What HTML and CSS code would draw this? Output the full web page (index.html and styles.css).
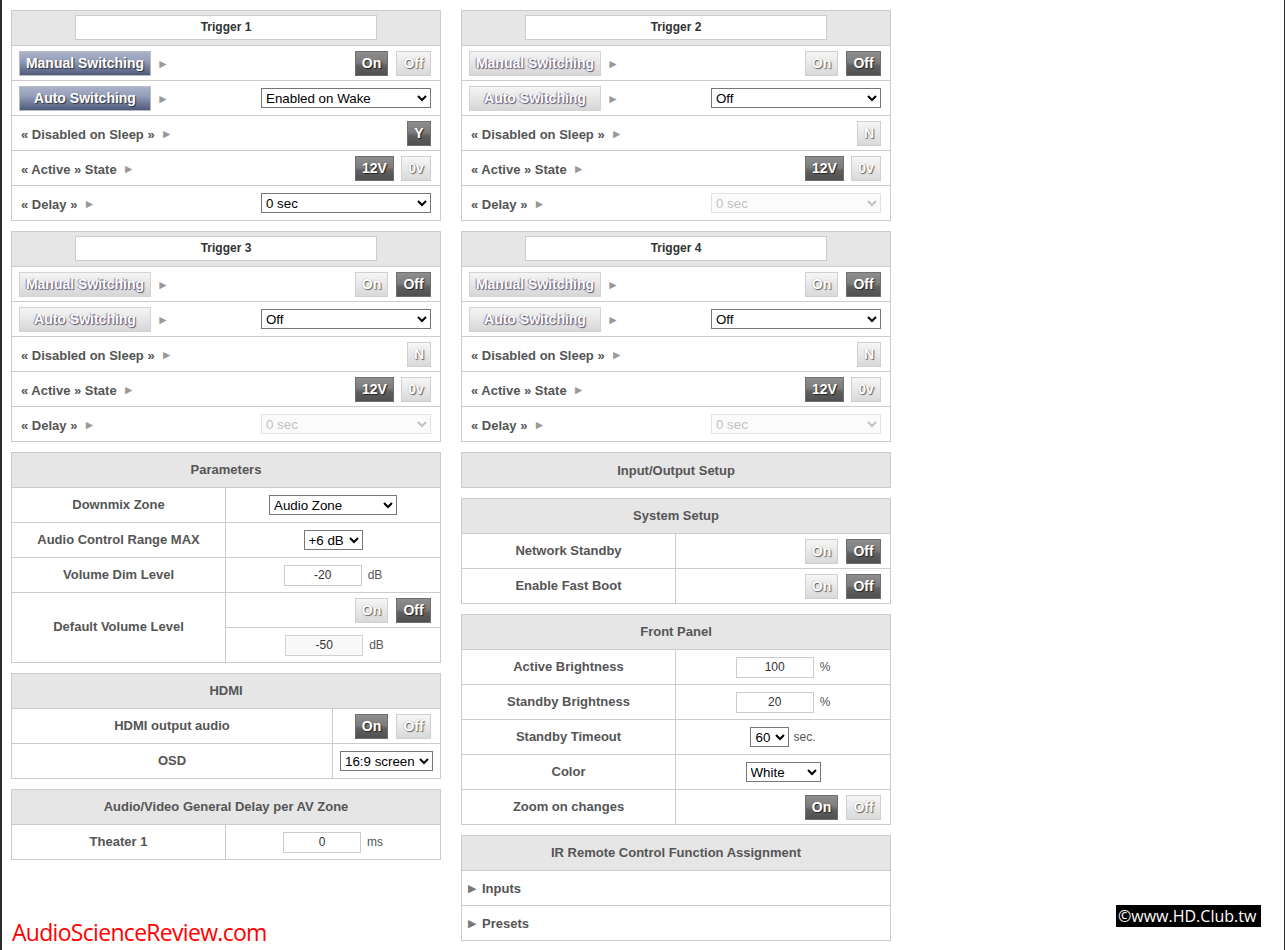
FILE: index.html
```html
<!DOCTYPE html>
<html>
<head>
<meta charset="utf-8">
<link rel="stylesheet" href="styles.css">
</head>
<body>
<div class="page">
  <div class="cols">
    <div class="col">
      <!-- Trigger 1 -->
      <div class="panel">
        <div class="head"><div class="titlebox">Trigger 1</div></div>
        <div class="row">
          <span class="sw sw-on">Manual Switching</span><span class="arr">►</span>
          <div class="right"><span class="b b-on w33">On</span><span class="b b-off w34">Off</span></div>
        </div>
        <div class="row">
          <span class="sw sw-on">Auto Switching</span><span class="arr">►</span>
          <div class="right"><select class="sel w170"><option>Enabled on Wake</option></select></div>
        </div>
        <div class="row">
          <span class="lbl">« Disabled on Sleep »</span><span class="arr">►</span>
          <div class="right"><span class="b b-on w24">Y</span></div>
        </div>
        <div class="row">
          <span class="lbl">« Active » State</span><span class="arr">►</span>
          <div class="right"><span class="b b-on w38">12V</span><span class="b b-off w30 gap7">0v</span></div>
        </div>
        <div class="row">
          <span class="lbl">« Delay »</span><span class="arr">►</span>
          <div class="right"><select class="sel w170"><option>0 sec</option></select></div>
        </div>
      </div>

      <!-- Trigger 3 -->
      <div class="panel">
        <div class="head"><div class="titlebox">Trigger 3</div></div>
        <div class="row">
          <span class="sw sw-off">Manual Switching</span><span class="arr">►</span>
          <div class="right"><span class="b b-off w33">On</span><span class="b b-on w34">Off</span></div>
        </div>
        <div class="row">
          <span class="sw sw-off">Auto Switching</span><span class="arr">►</span>
          <div class="right"><select class="sel w170"><option>Off</option></select></div>
        </div>
        <div class="row">
          <span class="lbl">« Disabled on Sleep »</span><span class="arr">►</span>
          <div class="right"><span class="b b-off w24">N</span></div>
        </div>
        <div class="row">
          <span class="lbl">« Active » State</span><span class="arr">►</span>
          <div class="right"><span class="b b-on w38">12V</span><span class="b b-off w30 gap7">0v</span></div>
        </div>
        <div class="row">
          <span class="lbl">« Delay »</span><span class="arr">►</span>
          <div class="right"><select class="sel w170" disabled><option>0 sec</option></select></div>
        </div>
      </div>

      <!-- Parameters -->
      <div class="panel">
        <div class="head"><span class="htitle">Parameters</span></div>
        <div class="row split">
          <div class="k">Downmix Zone</div>
          <div class="v"><select class="sel w128"><option>Audio Zone</option></select></div>
        </div>
        <div class="row split">
          <div class="k">Audio Control Range MAX</div>
          <div class="v"><select class="sel w58"><option>+6 dB</option></select></div>
        </div>
        <div class="row split">
          <div class="k">Volume Dim Level</div>
          <div class="v"><input class="inp" type="text" value="-20"><span class="unit">dB</span></div>
        </div>
        <div class="row split tall">
          <div class="k">Default Volume Level</div>
          <div class="v stack">
            <div class="sub end"><span class="b b-off w33">On</span><span class="b b-on w34">Off</span></div>
            <div class="sub mid"><input class="inp inp-dis" type="text" value="-50" disabled><span class="unit">dB</span></div>
          </div>
        </div>
      </div>

      <!-- HDMI -->
      <div class="panel">
        <div class="head"><span class="htitle">HDMI</span></div>
        <div class="row split hdmi">
          <div class="k">HDMI output audio</div>
          <div class="v end"><span class="b b-on w33">On</span><span class="b b-off w34">Off</span></div>
        </div>
        <div class="row split hdmi">
          <div class="k">OSD</div>
          <div class="v"><select class="sel w92"><option>16:9 screen</option></select></div>
        </div>
      </div>

      <!-- AV delay -->
      <div class="panel">
        <div class="head"><span class="htitle">Audio/Video General Delay per AV Zone</span></div>
        <div class="row split">
          <div class="k">Theater 1</div>
          <div class="v"><input class="inp" type="text" value="0"><span class="unit">ms</span></div>
        </div>
      </div>
    </div>

    <div class="col">
      <!-- Trigger 2 -->
      <div class="panel">
        <div class="head"><div class="titlebox">Trigger 2</div></div>
        <div class="row">
          <span class="sw sw-off">Manual Switching</span><span class="arr">►</span>
          <div class="right"><span class="b b-off w33">On</span><span class="b b-on w34">Off</span></div>
        </div>
        <div class="row">
          <span class="sw sw-off">Auto Switching</span><span class="arr">►</span>
          <div class="right"><select class="sel w170"><option>Off</option></select></div>
        </div>
        <div class="row">
          <span class="lbl">« Disabled on Sleep »</span><span class="arr">►</span>
          <div class="right"><span class="b b-off w24">N</span></div>
        </div>
        <div class="row">
          <span class="lbl">« Active » State</span><span class="arr">►</span>
          <div class="right"><span class="b b-on w38">12V</span><span class="b b-off w30 gap7">0v</span></div>
        </div>
        <div class="row">
          <span class="lbl">« Delay »</span><span class="arr">►</span>
          <div class="right"><select class="sel w170" disabled><option>0 sec</option></select></div>
        </div>
      </div>

      <!-- Trigger 4 -->
      <div class="panel">
        <div class="head"><div class="titlebox">Trigger 4</div></div>
        <div class="row">
          <span class="sw sw-off">Manual Switching</span><span class="arr">►</span>
          <div class="right"><span class="b b-off w33">On</span><span class="b b-on w34">Off</span></div>
        </div>
        <div class="row">
          <span class="sw sw-off">Auto Switching</span><span class="arr">►</span>
          <div class="right"><select class="sel w170"><option>Off</option></select></div>
        </div>
        <div class="row">
          <span class="lbl">« Disabled on Sleep »</span><span class="arr">►</span>
          <div class="right"><span class="b b-off w24">N</span></div>
        </div>
        <div class="row">
          <span class="lbl">« Active » State</span><span class="arr">►</span>
          <div class="right"><span class="b b-on w38">12V</span><span class="b b-off w30 gap7">0v</span></div>
        </div>
        <div class="row">
          <span class="lbl">« Delay »</span><span class="arr">►</span>
          <div class="right"><select class="sel w170" disabled><option>0 sec</option></select></div>
        </div>
      </div>

      <!-- I/O -->
      <div class="panel">
        <div class="head nob"><span class="htitle">Input/Output Setup</span></div>
      </div>

      <!-- System Setup -->
      <div class="panel">
        <div class="head"><span class="htitle">System Setup</span></div>
        <div class="row split">
          <div class="k">Network Standby</div>
          <div class="v end"><span class="b b-off w33">On</span><span class="b b-on w34">Off</span></div>
        </div>
        <div class="row split">
          <div class="k">Enable Fast Boot</div>
          <div class="v end"><span class="b b-off w33">On</span><span class="b b-on w34">Off</span></div>
        </div>
      </div>

      <!-- Front Panel -->
      <div class="panel">
        <div class="head"><span class="htitle">Front Panel</span></div>
        <div class="row split">
          <div class="k">Active Brightness</div>
          <div class="v"><input class="inp" type="text" value="100"><span class="unit">%</span></div>
        </div>
        <div class="row split">
          <div class="k">Standby Brightness</div>
          <div class="v"><input class="inp" type="text" value="20"><span class="unit">%</span></div>
        </div>
        <div class="row split">
          <div class="k">Standby Timeout</div>
          <div class="v"><select class="sel w38"><option>60</option></select><span class="unit u4">sec.</span></div>
        </div>
        <div class="row split">
          <div class="k">Color</div>
          <div class="v"><select class="sel w75"><option>White</option></select></div>
        </div>
        <div class="row split">
          <div class="k">Zoom on changes</div>
          <div class="v end"><span class="b b-on w33">On</span><span class="b b-off w34">Off</span></div>
        </div>
      </div>

      <!-- IR Remote -->
      <div class="panel">
        <div class="head"><span class="htitle">IR Remote Control Function Assignment</span></div>
        <div class="row ir"><span class="tri">▶</span><span class="lbl">Inputs</span></div>
        <div class="row ir"><span class="tri">▶</span><span class="lbl">Presets</span></div>
      </div>
    </div>
  </div>

  <div class="wm-asr">AudioScienceReview.com</div>
  <div class="wm-hd">©www.HD.Club.tw</div>
</div>
</body>
</html>
```

FILE: styles.css
```css
html, body {
  margin: 0;
  padding: 0;
  background: #fff;
}

.page {
  position: relative;
  box-sizing: border-box;
  width: 1285px;
  height: 950px;
  overflow: hidden;
  border-left: 2px solid #2b2b2b;
  border-right: 1px solid #2b2b2b;
  padding: 10px 0 0 9px;
  font-family: "Liberation Sans", Arial, sans-serif;
  color: #555;
}

.cols {
  display: flex;
  gap: 20px;
}

.col {
  width: 430px;
  display: flex;
  flex-direction: column;
  gap: 10px;
}

.panel {
  border: 1px solid #cccccc;
  background: #fff;
}

.head {
  box-sizing: border-box;
  height: 35px;
  padding-bottom: 1px;
  background: #e6e6e6;
  border-bottom: 1px solid #cccccc;
  display: flex;
  align-items: center;
  justify-content: center;
}

.head.nob {
  height: 34px;
  padding-bottom: 0;
  border-bottom: none;
}

.titlebox {
  box-sizing: border-box;
  width: 302px;
  height: 25px;
  padding-bottom: 1px;
  background: #fff;
  border: 1px solid #cccccc;
  display: flex;
  align-items: center;
  justify-content: center;
  font-size: 12px;
  font-weight: bold;
  color: #333;
}

.htitle {
  font-size: 13px;
  font-weight: bold;
  color: #555;
}

.row {
  height: 34px;
  border-bottom: 1px solid #cccccc;
  display: flex;
  align-items: center;
  padding: 0 9px 0 7px;
}

.row:last-child {
  border-bottom: none;
}

.right {
  margin-left: auto;
  display: flex;
  align-items: center;
}

.lbl {
  font-size: 13px;
  font-weight: bold;
  color: #555;
  margin-left: 2px;
  padding-top: 2px;
}

.arr {
  font-size: 12px;
  color: #999;
  margin-left: 6px;
  padding-top: 1px;
}

/* switching buttons */
.sw {
  box-sizing: border-box;
  width: 132px;
  height: 25px;
  display: flex;
  align-items: center;
  justify-content: center;
  font-size: 14px;
  font-weight: bold;
  color: #fff;
  white-space: nowrap;
}

.sw-on {
  border: 1px solid #b9bcc6;
  background: linear-gradient(#aab2c9 0%, #949eb9 40%, #7a85a3 60%, #5d6888 88%, #4e5877 100%);
  text-shadow: 1px 1px 1px #2a2f40;
}

.sw-off {
  border: 1px solid #d4d4d4;
  background: linear-gradient(#f5f5f5 0%, #e6e6e6 50%, #d6d6d6 100%);
  text-shadow: 1px 1px 1px #5e5470, -1px 0 1px #8a8098;
}

/* on/off buttons */
.b {
  box-sizing: border-box;
  height: 25px;
  display: flex;
  align-items: center;
  justify-content: center;
  font-size: 14px;
  font-weight: bold;
  color: #fff;
  margin-left: 8px;
}

.b:first-child {
  margin-left: 0;
}

.b.gap7 {
  margin-left: 7px;
}

.b-on {
  border: 1px solid #6f6f6f;
  background: linear-gradient(#8e8e8e 0%, #7c7c7c 45%, #5f5f5f 60%, #505050 100%);
  text-shadow: 1px 1px 1px #222;
}

.b-off {
  border: 1px solid #cfcfcf;
  background: linear-gradient(#f6f6f6 0%, #e8e8e8 50%, #d9d9d9 100%);
  text-shadow: 1px 1px 1px #666, 0 0 1px #999;
}

.w24 { width: 24px; }
.w30 { width: 30px; }
.w33 { width: 33px; }
.w34 { width: 35px; }
.w38 { width: 39px; }

/* form controls */
.sel {
  box-sizing: border-box;
  height: 20px;
  font-family: "Liberation Sans", Arial, sans-serif;
  font-size: 13.33px;
  color: #000;
  background: #fff;
  border: 1px solid #767676;
  border-radius: 0;
  padding: 0;
}

.sel:disabled {
  color: #a8a8a8;
  border-color: #d6d6d6;
  background: #fafafa;
}

.w170 { width: 170px; }
.w128 { width: 128px; }
.w58 { width: 59px; }
.w92 { width: 93px; }
.sel.w38 { width: 39px; }
.w75 { width: 75px; }

.inp {
  box-sizing: border-box;
  width: 78px;
  height: 21px;
  border: 1px solid #cccccc;
  background: #fff;
  font-family: "Liberation Sans", Arial, sans-serif;
  font-size: 12px;
  color: #333;
  text-align: center;
  padding: 0;
}

.inp.inp-dis {
  background-color: #f9f9f9;
  color: #333;
  border-color: #d0d0d0;
}

.unit {
  font-size: 12px;
  color: #555;
  margin-left: 6px;
}

.unit.u4 {
  margin-left: 4px;
}

/* two column rows */
.row.split {
  display: grid;
  grid-template-columns: 214px 1fr;
  padding: 0;
  align-items: stretch;
}

.row.split.hdmi {
  grid-template-columns: 321px 1fr;
}

.k {
  border-right: 1px solid #cccccc;
  display: flex;
  align-items: center;
  justify-content: center;
  padding-bottom: 2px;
  font-size: 13px;
  font-weight: bold;
  color: #555;
}

.v {
  display: flex;
  align-items: center;
  justify-content: center;
}

.v.end,
.sub.end {
  justify-content: flex-end;
  padding-right: 9px;
}

.row.tall {
  height: 69px;
}

.v.stack {
  flex-direction: column;
  align-items: stretch;
}

.sub {
  height: 34px;
  display: flex;
  align-items: center;
}

.sub.mid {
  justify-content: center;
  border-top: 1px solid #cccccc;
  padding-left: 3px;
}

.row.ir {
  padding-left: 6px;
}

.row.ir .lbl {
  margin-left: 6px;
  padding-top: 0;
}

.tri {
  font-size: 11px;
  color: #777;
}

/* watermarks */
.wm-asr {
  position: absolute;
  left: 10px;
  top: 919px;
  font-family: "Open Sans", sans-serif;
  font-size: 23px;
  letter-spacing: -0.7px;
  color: #ff0000;
  line-height: 26px;
}

.wm-hd {
  position: absolute;
  left: 1114px;
  top: 905px;
  height: 22px;
  padding: 0 5px 0 2px;
  background: #000;
  color: #fff;
  font-family: "Open Sans", sans-serif;
  font-size: 16px;
  line-height: 22px;
}
```
